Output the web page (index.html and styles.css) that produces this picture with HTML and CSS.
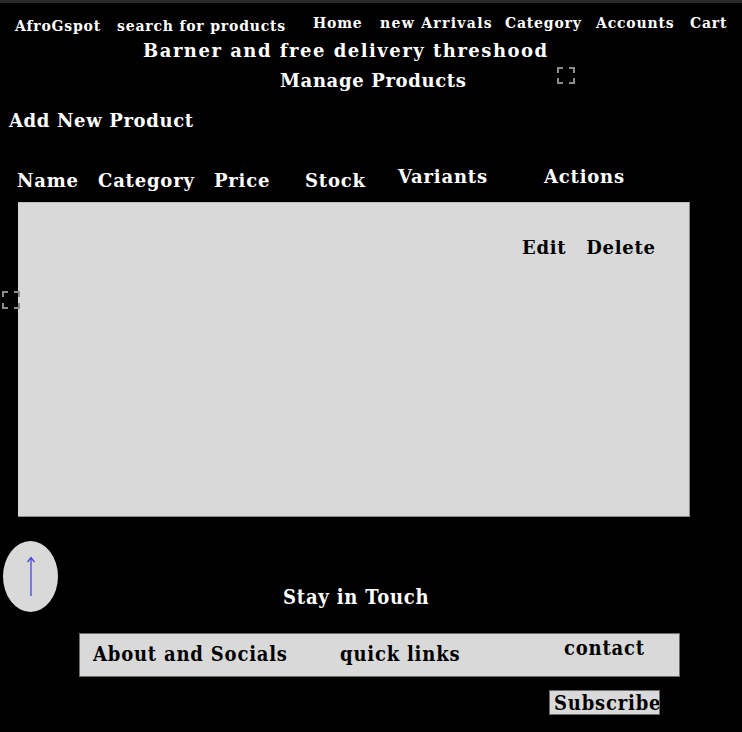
FILE: index.html
```html
<!DOCTYPE html>
<html>
<head>
<meta charset="utf-8">
<link rel="stylesheet" href="styles.css">
</head>
<body>
<div class="topstrip"></div>
<header class="nav">
  <span class="logo">AfroGspot</span>
  <span class="search">search for products</span>
  <span class="link home">Home</span>
  <span class="link arrivals">new Arrivals</span>
  <span class="link cat">Category</span>
  <span class="link acc">Accounts</span>
  <span class="link cart">Cart</span>
</header>
<div class="hero">
  <div class="banner">Barner and free delivery threshood</div>
  <div class="titlerow">
    <h1 class="title">Manage Products</h1>
    <svg class="fs fs-title" width="18" height="17" viewBox="0 0 18 17"><path d="M1 6V1h5M12 1h5v5M17 11v5h-5M6 16H1v-5" fill="none" stroke="#8c8c8c" stroke-width="2"/></svg>
  </div>
</div>
<main class="main">
  <h2 class="add">Add New Product</h2>
  <div class="thead">
    <span class="th">Name</span>
    <span class="th">Category</span>
    <span class="th">Price</span>
    <span class="th">Stock</span>
    <span class="th up">Variants</span>
    <span class="th up">Actions</span>
  </div>
  <div class="panel">
    <div class="actions"><span>Edit</span><span>Delete</span></div>
  </div>
  <svg class="fs fs-left" width="18" height="18" viewBox="0 0 18 18"><path d="M1 6V1h5M12 1h5v5M17 12v5h-5M6 17H1v-5" fill="none" stroke="#8c8c8c" stroke-width="2"/></svg>
</main>
<footer class="footer">
  <div class="totop"><svg width="10" height="42" viewBox="0 0 10 42"><path d="M5 2V40M1.5 6L5 1.5 8.5 6" fill="none" stroke="#4747d8" stroke-width="1.3"/></svg></div>
  <h3 class="stay">Stay in Touch</h3>
  <div class="fbar">
    <span class="about">About and Socials</span>
    <span class="quick">quick links</span>
    <span class="contact">contact</span>
  </div>
  <div class="subrow"><button class="subscribe">Subscribe</button></div>
</footer>
</body>
</html>
```
FILE: styles.css
```css
html, body {
  margin: 0;
  padding: 0;
  background: #000;
  width: 742px;
  height: 732px;
  overflow: hidden;
  font-family: "DejaVu Serif", serif;
  font-weight: bold;
  color: #fff;
}
.topstrip {
  height: 3px;
  background: #2a2a2a;
}
.nav {
  display: flex;
  align-items: flex-start;
  height: 38px;
  font-size: 14px;
  letter-spacing: 0.8px;
}
.nav span { white-space: nowrap; }
.logo { margin: 15px 0 0 15px; width: 102px; }
.search { margin-top: 15px; width: 196px; }
.link { margin-top: 12px; }
.home { width: 67px; }
.arrivals { width: 125px; letter-spacing: 1.3px; }
.cat { width: 91px; }
.acc { width: 94px; }
.hero {
  position: relative;
}
.banner {
  font-size: 18px;
  letter-spacing: 1.5px;
  padding-left: 143px;
  line-height: 22px;
  margin-top: -1px;
}
.titlerow {
  display: flex;
  align-items: center;
  padding-left: 280px;
  margin-top: 7px;
  height: 24px;
}
.title {
  margin: 0;
  font-size: 18px;
  letter-spacing: 0.65px;
  line-height: 24px;
  width: 277px;
}
.fs-title { margin-top: -12px; }
.main { position: relative; }
.add {
  margin: 16px 0 0 9px;
  font-size: 18px;
  letter-spacing: 0.65px;
  line-height: 24px;
}
.thead {
  display: grid;
  grid-template-columns: 81px 116px 91px 93px 146px auto;
  padding-left: 17px;
  margin-top: 34px;
  height: 35px;
  font-size: 18px;
  letter-spacing: 0.8px;
}
.th { margin-top: 3px; white-space: nowrap; }
.th.up { margin-top: -1px; }
.panel {
  margin-left: 18px;
  width: 671px;
  height: 313px;
  background: #d9d9d9;
  border-right: 1px solid #8a8a8a;
  border-bottom: 1px solid #8a8a8a;
  border-top: 1px solid #bdbdbd;
  color: #000;
}
.actions {
  display: flex;
  gap: 20px;
  padding: 34px 0 0 504px;
  font-size: 18px;
  letter-spacing: 0.7px;
}
.fs-left {
  position: absolute;
  left: 2px;
  top: 182px;
}
.footer {
  position: relative;
}
.totop {
  position: absolute;
  left: 3px;
  top: 24px;
  width: 55px;
  height: 71px;
  border-radius: 50%;
  background: #d9d9d9;
  display: flex;
  align-items: center;
  justify-content: center;
}
.stay {
  margin: 0;
  padding: 68px 0 0 283px;
  font-family: "DejaVu Serif Condensed", "DejaVu Serif", serif;
  font-size: 20px;
  letter-spacing: 0.8px;
  line-height: 24px;
}
.fbar {
  margin: 24px 0 0 79px;
  width: 599px;
  height: 42px;
  background: #d9d9d9;
  border: 1px solid #6d6d6d;
  color: #000;
  display: flex;
  font-family: "DejaVu Serif Condensed", "DejaVu Serif", serif;
  font-size: 20px;
  letter-spacing: 0.8px;
}
.about { margin: 8px 0 0 13px; width: 247px; }
.quick { margin: 8px 0 0 0; width: 224px; }
.contact { margin: 2px 0 0 0; }
.subrow {
  padding-left: 549px;
  margin-top: 13px;
}
.subscribe {
  font-family: "DejaVu Serif Condensed", "DejaVu Serif", serif;
  font-weight: bold;
  font-size: 20px;
  letter-spacing: 0.8px;
  color: #000;
  background: #d9d9d9;
  border: 1px solid #6d6d6d;
  width: 111px;
  height: 25px;
  padding: 0 0 0 4px;
  text-align: left;
  line-height: 22px;
  border-radius: 0;
  white-space: nowrap;
  overflow: hidden;
}
```
